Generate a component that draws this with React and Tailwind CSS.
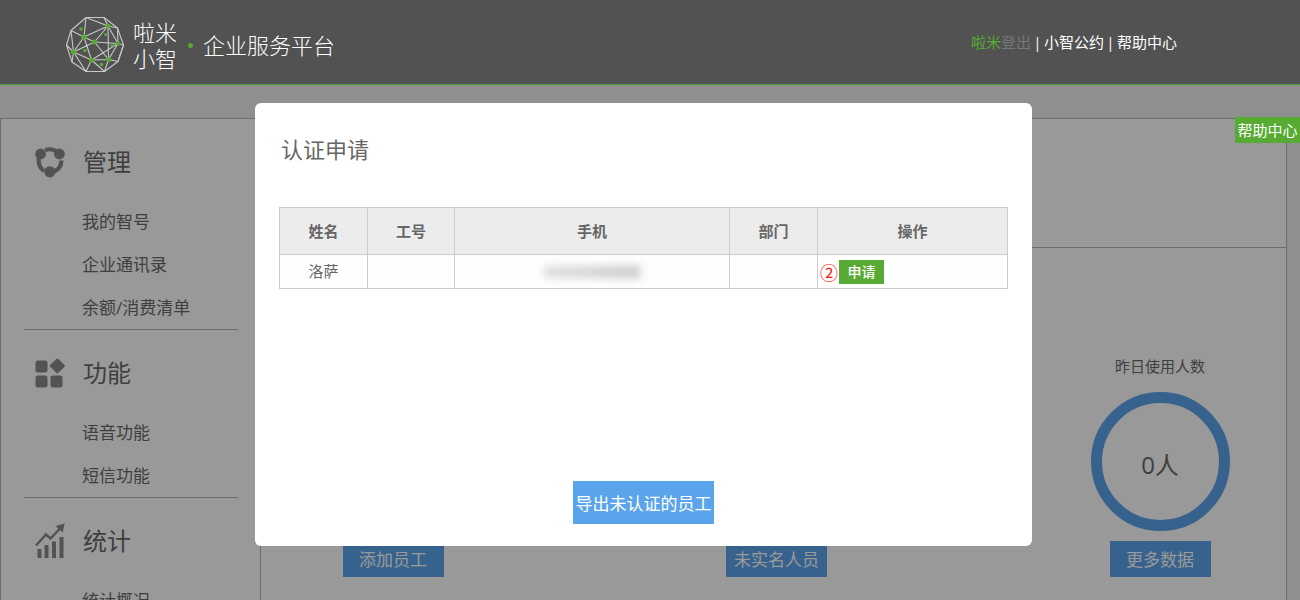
import React from 'react';

const menu = [
  { title: '管理', icon: ManageIcon, items: ['我的智号', '企业通讯录', '余额/消费清单'] },
  { title: '功能', icon: FeatureIcon, items: ['语音功能', '短信功能'] },
  { title: '统计', icon: StatsIcon, items: ['统计概况'] },
];

const stats = [
  { label: '企业员工人数', value: '0人', action: '添加员工' },
  { label: '未实名人数', value: '0人', action: '未实名人员' },
  { label: '昨日使用人数', value: '0人', action: '更多数据' },
];

const applicants = [{ name: '洛萨', jobNo: '', dept: '' }];

function ManageIcon() {
  return (
    <svg viewBox="0 0 30 32" className="w-[30px] h-8" aria-hidden="true">
      <g fill="none" stroke="currentColor" strokeWidth="4.2">
        <path d="M10 4.2Q16 1.8 22 5.5" />
        <path d="M26.4 14.5Q26.6 22 19 25.6" />
        <path d="M9 25.2Q2.2 20 4 10" />
      </g>
      <g fill="currentColor">
        <circle cx="5.6" cy="8" r="5.4" />
        <circle cx="24.4" cy="8" r="5.4" />
        <circle cx="14.8" cy="25.8" r="5.6" />
      </g>
    </svg>
  );
}

function FeatureIcon() {
  return (
    <svg viewBox="0 0 30 30" className="w-[30px] h-[30px]" fill="currentColor" aria-hidden="true">
      <rect x="0.5" y="2.5" width="12" height="12" rx="2.2" />
      <rect x="0.5" y="17.5" width="12" height="12" rx="2.2" />
      <rect x="15.5" y="17.5" width="12" height="12" rx="2.2" />
      <rect x="16.6" y="2.2" width="11.4" height="11.4" rx="1.6" transform="rotate(45 22.3 7.9)" />
    </svg>
  );
}

function StatsIcon() {
  return (
    <svg viewBox="0 0 30 35" className="w-[30px] h-[35px]" fill="currentColor" aria-hidden="true">
      <rect x="2.5" y="26" width="4" height="9" />
      <rect x="9.5" y="22" width="4" height="13" />
      <rect x="17" y="18.5" width="4" height="16.5" />
      <rect x="24.5" y="14" width="4" height="21" />
      <path d="M1 22.5L11 11.5L15.5 15.5L25 5.5" fill="none" stroke="currentColor" strokeWidth="2.4" />
      <path d="M29.8 0.5L20.5 3L27.6 9.5Z" />
    </svg>
  );
}

function LogoMark() {
  return (
    <svg viewBox="0 0 60 58" className="w-[60px] h-[58px]" aria-hidden="true">
      <g fill="none" stroke="#c8c8c8" strokeWidth="1.1" strokeLinejoin="round">
        <path d="M21 1.5H39L52.5 12L58.5 29L53 45.5L39.5 55.5H21L7 46L1.5 29L6 14.5Z" />
        <path d="M21 1.5L19 21L6 14.5M21 1.5L43 10L39 1.5M43 10L52.5 12M43 10L19 21L29.5 26L43 10L53 27.5L58.5 29" />
        <path d="M6 14.5L8.5 36L1.5 29M8.5 36L19 21L26.5 44L8.5 36L7 46M8.5 36L21 55.5L26.5 44L39.5 55.5L43.5 43.5L26.5 44L53 27.5L43.5 43.5L29.5 26L8.5 36" />
        <path d="M43 10L43.5 43.5L53 45.5L58.5 29M52.5 12L53 27.5M29.5 26L53 27.5" />
      </g>
      <g fill="#57ab33">
        <circle cx="43" cy="10" r="2.6" />
        <circle cx="19" cy="21" r="2.6" />
        <circle cx="29.5" cy="26" r="2.6" />
        <circle cx="8.5" cy="36" r="2.6" />
        <circle cx="26.5" cy="44" r="2.6" />
        <circle cx="43.5" cy="43.5" r="2.6" />
        <circle cx="53" cy="27.5" r="2.2" />
        <circle cx="16" cy="13" r="1.8" />
        <circle cx="40.5" cy="18.5" r="1.5" />
        <circle cx="47" cy="29.5" r="1.8" />
        <circle cx="20" cy="34.5" r="1.8" />
        <circle cx="36.5" cy="48.5" r="1.8" />
      </g>
    </svg>
  );
}

function Header() {
  return (
    <header className="relative z-20 shrink-0 h-[85px] flex items-center justify-between pl-[65px] pr-[123px] bg-[#525252] border-b border-[#4b9a32] text-white">
      <div className="flex items-center pt-1.5">
        <LogoMark />
        <div className="ml-2 text-[22px] leading-[26px] font-light">
          <p>啦米</p>
          <p>小智</p>
        </div>
        <span className="ml-[11px] mr-2.5 w-[5px] h-[5px] rounded-full bg-[#57ab33]" />
        <p className="text-[22px] leading-[26px] font-light">企业服务平台</p>
      </div>
      <nav className="flex items-center text-[15px] leading-5">
        <a href="#user" className="text-[#57ab33]">啦米</a>
        <a href="#logout" className="text-[#777]">登出</a>
        <span className="w-[13px] text-center">|</span>
        <a href="#rules">小智公约</a>
        <span className="w-[13px] text-center">|</span>
        <a href="#help">帮助中心</a>
      </nav>
    </header>
  );
}

function Sidebar() {
  return (
    <aside className="shrink-0 w-[260px] pl-[23px] pr-[22px] border-r border-[#b4b4b4]">
      {menu.map(({ title, icon: Icon, items }) => (
        <section key={title} className="border-b border-[#b4b4b4] text-[#6a6a6a]">
          <h2 className="h-[81px] pt-1 flex items-center text-2xl">
            <span className="w-[59px] pl-[11px] text-[#8a8a8a]">
              <Icon />
            </span>
            {title}
          </h2>
          <ul className="pl-[58px] text-[17px]">
            {items.map((item) => (
              <li key={item} className="h-[43px] flex items-center">
                <a href="#menu">{item}</a>
              </li>
            ))}
          </ul>
        </section>
      ))}
    </aside>
  );
}

function StatCard({ label, value, action }) {
  return (
    <div className="w-[140px] flex flex-col items-center text-[#6a6a6a]">
      <p className="text-[15px] leading-5">{label}</p>
      <div className="mt-4 w-[139px] h-[139px] pt-1.5 rounded-full border-[11px] border-[#5aa4eb] flex items-center justify-center text-2xl">
        {value}
      </div>
      <button type="button" className="mt-2.5 w-[101px] h-9 pt-0.5 bg-[#5aa4eb] text-white text-[17px]">
        {action}
      </button>
    </div>
  );
}

function ApplyModal() {
  return (
    <div
      role="dialog"
      aria-modal="true"
      aria-labelledby="apply-title"
      className="w-[777px] min-h-[443px] px-6 pt-[30px] pb-[22px] flex flex-col items-center rounded-md bg-white text-[#666]"
    >
      <h1 id="apply-title" className="self-start pl-0.5 text-[22px] leading-8">认证申请</h1>
      <table className="mt-[42px] w-full table-fixed border-collapse text-[15px] text-center [&_th]:border [&_td]:border [&_th]:border-[#ccc] [&_td]:border-[#ccc]">
        <colgroup>
          <col className="w-[88px]" />
          <col className="w-[87px]" />
          <col />
          <col className="w-[88px]" />
          <col className="w-[190px]" />
        </colgroup>
        <thead>
          <tr className="h-[47px] bg-[#ececec]">
            <th>姓名</th>
            <th>工号</th>
            <th>手机</th>
            <th>部门</th>
            <th>操作</th>
          </tr>
        </thead>
        <tbody>
          {applicants.map((a) => (
            <tr key={a.name} className="h-[34px] bg-[#fdfefd]">
              <td>{a.name}</td>
              <td>{a.jobNo}</td>
              <td>
                <span className="block mx-auto w-24 h-3 bg-linear-to-r from-[#dedede] to-[#c8c8c8] blur-[4px]" />
              </td>
              <td>{a.dept}</td>
              <td>
                <div className="flex items-center gap-px pl-0.5">
                  <span className="w-[18px] font-['Noto_Sans_CJK_SC',sans-serif] text-lg leading-6 text-[#ff1010]">②</span>
                  <button type="button" className="w-[45px] h-6 bg-[#57ab33] text-sm text-white font-medium">
                    申请
                  </button>
                </div>
              </td>
            </tr>
          ))}
        </tbody>
      </table>
      <button type="button" className="mt-auto w-[141px] h-[43px] pt-0.5 bg-[#5aa4eb] text-[17px] text-white whitespace-nowrap">
        导出未认证的员工
      </button>
    </div>
  );
}

export default function App() {
  return (
    <div className="relative h-screen overflow-hidden flex flex-col bg-[#eee] font-['Open_Sans','Noto_Sans_CJK_SC',sans-serif]">
      <Header />

      <div className="grow min-h-[515px] mt-[33px] mr-[13px] flex bg-white border border-b-0 border-[#b4b4b4]">
        <Sidebar />
        <main className="grow">
          <div className="h-[129px] border-b border-[#b4b4b4]" />
          <div className="pt-[108px] pl-[62px] pr-14 flex justify-between">
            {stats.map((s) => (
              <StatCard key={s.action} {...s} />
            ))}
          </div>
        </main>
      </div>

      <div className="absolute inset-0 z-10 flex justify-center items-start pt-[103px] pr-[13px] bg-black/40">
        <ApplyModal />
      </div>

      <a
        href="#help"
        className="absolute z-20 right-0 top-[117px] w-[65px] h-[26px] flex items-center justify-center bg-[#57ab33] text-[15px] text-white"
      >
        帮助中心
      </a>
    </div>
  );
}
